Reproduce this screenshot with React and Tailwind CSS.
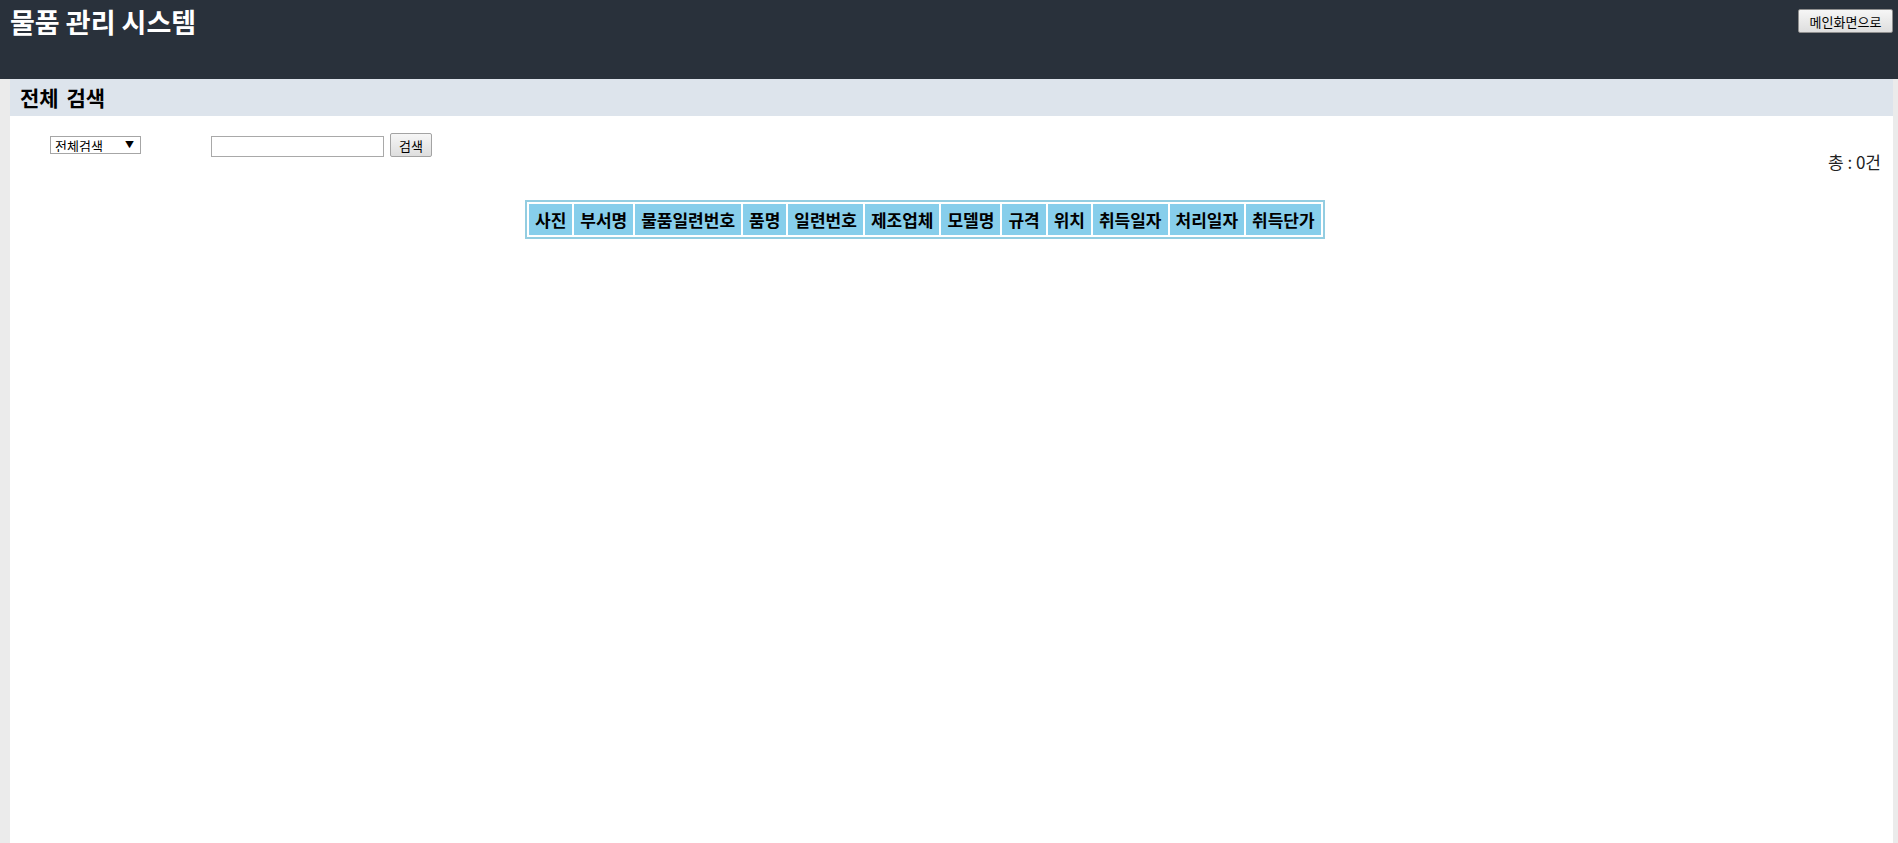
// 물품 관리 시스템 — 전체 검색 page
// Dark top bar, section heading, search row, empty result table

const COLUMNS = [
  "사진",
  "부서명",
  "물품일련번호",
  "품명",
  "일련번호",
  "제조업체",
  "모델명",
  "규격",
  "위치",
  "취득일자",
  "처리일자",
  "취득단가",
];

const FONT = {
  fontFamily: '"Noto Sans CJK KR", "Noto Sans", "Liberation Sans", sans-serif',
};

export default function App() {
  return (
    <div className="min-h-screen flex flex-col bg-[#ebebeb]" style={FONT}>
      {/* Top bar */}
      <header className="h-[79px] bg-[#29313b] flex justify-between items-start shrink-0">
        <h1 className="text-white text-[27px] font-bold leading-[32px] pl-[10px] pt-[6px]">
          물품 관리 시스템
        </h1>
        <button className="mt-[9px] mr-[5px] h-[24px] w-[95px] text-[13px] leading-none text-black bg-gradient-to-b from-[#f6f6f6] to-[#dedede] border border-[#8f8f8f] rounded-[2px]">
          메인화면으로
        </button>
      </header>

      {/* Content */}
      <main className="flex-1 ml-[10px] mr-[5px] bg-white">
        <div className="h-[37px] bg-[#dde4ec] pl-[10px] flex items-center">
          <h2 className="text-[21px] font-bold text-black leading-none [word-spacing:3px]">전체 검색</h2>
        </div>

        {/* Search row */}
        <div className="h-[36px] flex items-start pt-[17px]">
          <div className="relative ml-[40px] mt-[3px] w-[91px] h-[18px] border border-[#a6a6a6] flex items-center">
            <select className="appearance-none w-full h-full pl-[4px] text-[13px] leading-none text-black bg-transparent outline-none">
              <option>전체검색</option>
            </select>
            <span className="absolute right-[6px] top-[2px] text-[9px] leading-[12px] text-black pointer-events-none">
              ▼
            </span>
          </div>
          <input
            type="text"
            className="ml-[70px] mt-[3px] w-[173px] h-[21px] border border-[#a9a9a9] outline-none px-1 text-[13px]"
          />
          <button className="ml-[6px] w-[42px] h-[24px] text-[13px] leading-none text-black bg-gradient-to-b from-[#f6f6f6] to-[#dedede] border border-[#a3a3a3] rounded-[2px]">
            검색
          </button>
        </div>

        <div className="h-[20px] text-right pr-[12px] text-[17px] leading-[20px] text-[#222]">
          총 : 0건
        </div>

        {/* Result table */}
        <div className="mt-[28px] ml-[515px]">
          <table className="border-2 border-[#93cde1] border-separate border-spacing-[2px]">
            <thead>
              <tr>
                {COLUMNS.map((c) => (
                  <th
                    key={c}
                    className="bg-[#87ceeb] text-black text-[17px] font-bold leading-[21px] px-[6px] py-[5px] whitespace-nowrap"
                  >
                    {c}
                  </th>
                ))}
              </tr>
            </thead>
          </table>
        </div>
      </main>
    </div>
  );
}
